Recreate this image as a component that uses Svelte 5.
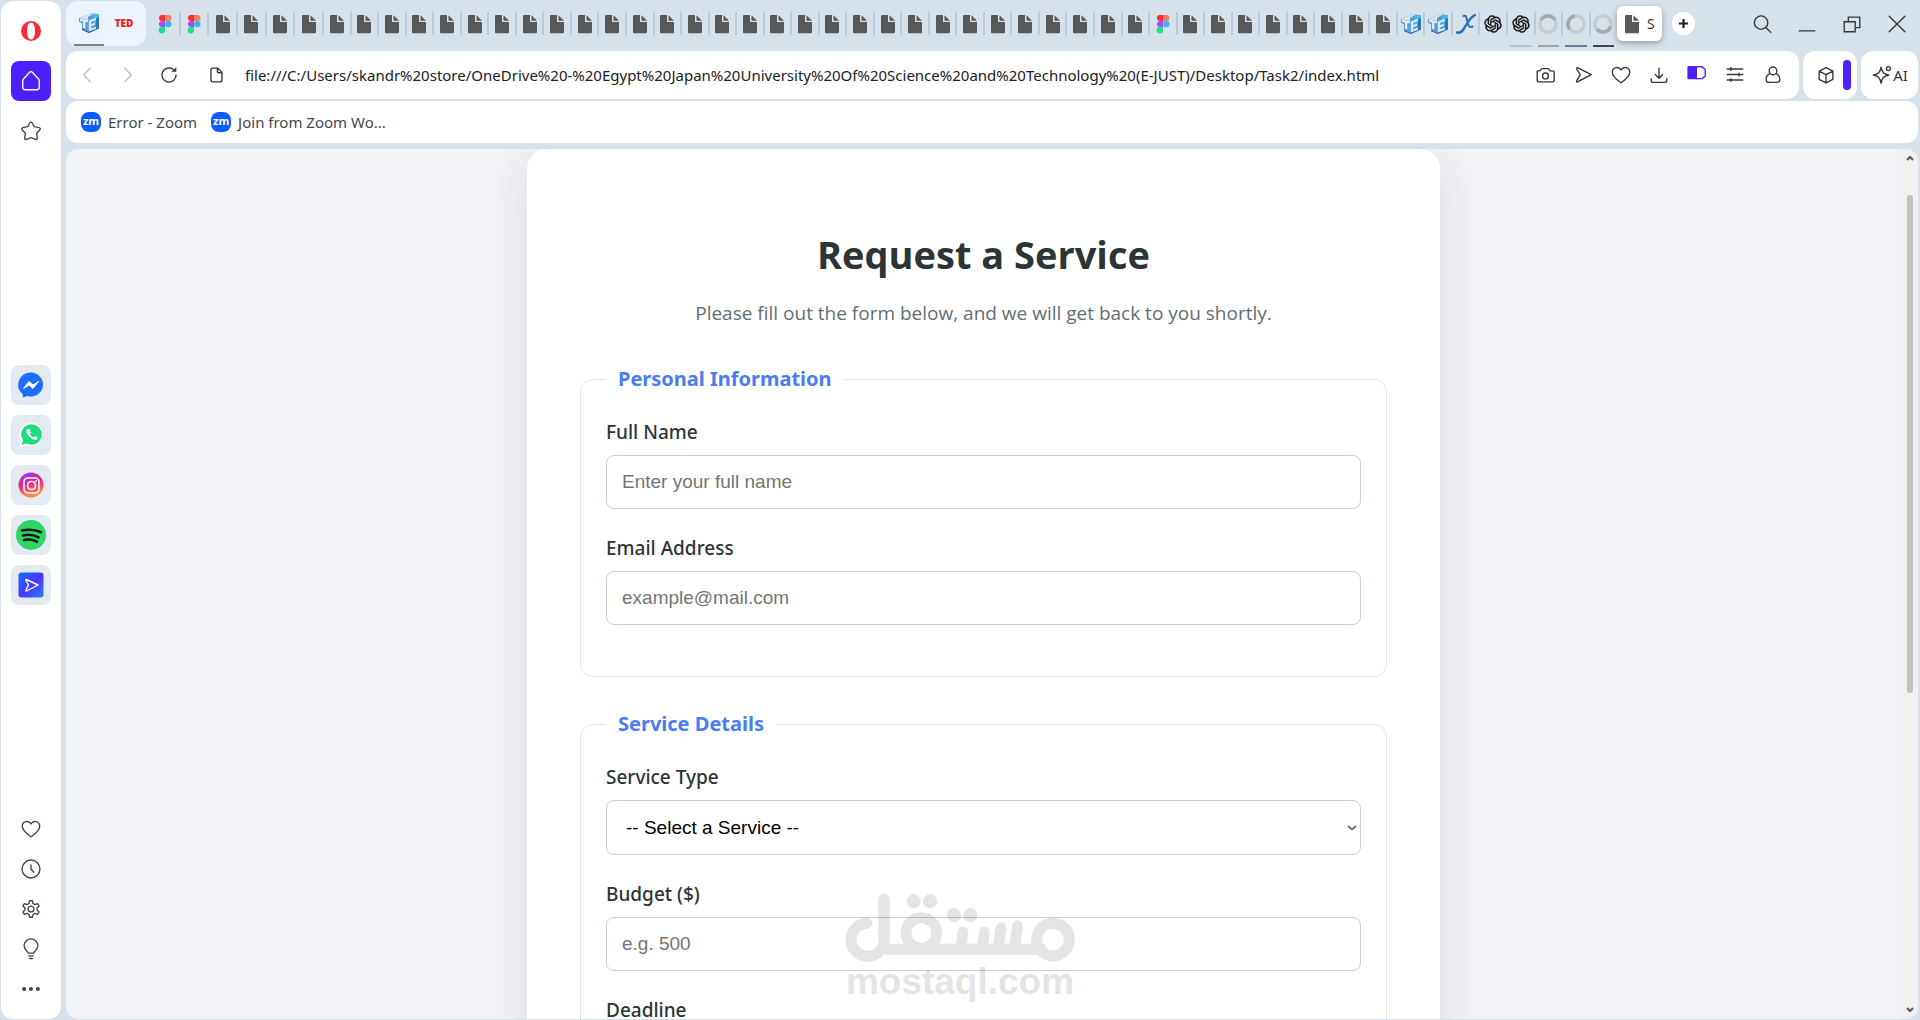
<script>
  const repeat = (kind, n) => Array.from({ length: n }, () => ({ kind }));
  const leading = [...repeat('figma', 2), ...repeat('doc', 4)];
  const trailing = [
    ...repeat('doc', 30),
    ...repeat('figma', 1),
    ...repeat('doc', 8),
    ...repeat('cube', 2),
    { kind: 'x' },
    { kind: 'gpt' },
    { kind: 'gpt', mark: 'pale' },
    { kind: 'spin', mark: 'grey' },
    { kind: 'spin', mark: 'blue', turn: 'left' },
    { kind: 'spin', mark: 'dark', turn: 'down' }
  ];
  const tools = ['camera', 'send', 'heart', 'download', 'battery', 'sliders', 'person'];
  const toolLabels = {
    camera: 'Snapshot', send: 'My Flow', heart: 'Add to bookmarks', download: 'Downloads',
    battery: 'Battery saver', sliders: 'Easy setup', person: 'Profile', bulb: 'Tips',
    clock: 'History', gear: 'Settings', more: 'More'
  };
  const apps = ['messenger', 'whatsapp', 'instagram', 'spotify', 'player'];
  const bottom = ['heart', 'clock', 'gear', 'bulb', 'more'];
  const bookmarks = ['Error - Zoom', 'Join from Zoom Wo...'];
</script>

{#snippet favicon(kind, turn)}
  {#if kind === 'figma'}
    <svg class="fav" viewBox="0 0 20 20">
      <path d="M10 1H7a3 3 0 0 0 0 6h3z" fill="#f92f33" /><path d="M10 1h3.500a3 3 0 0 1 0 6H10z" fill="#ff7f5c" />
      <path d="M10 7H7a3 3 0 0 0 0 6h3z" fill="#a050fb" /><circle cx="13.300" cy="10" r="3.200" fill="#42b4ec" />
      <path d="M10 13H7a3.200 3.200 0 1 0 3 3.200z" fill="#19e184" />
    </svg>
  {:else if kind === 'doc'}
    <svg class="fav" viewBox="0 0 20 20">
      <path d="M4.500 1H10v7h7v10a1.200 1.200 0 0 1-1.200 1.200H4.300A1.200 1.200 0 0 1 3 18V2.300A1.300 1.300 0 0 1 4.500 1z" fill="#58595b" /><path d="M11.500 1.200 17 6.700h-5.500z" fill="#58595b" />
    </svg>
  {:else if kind === 'cube'}
    <svg class="fav" viewBox="0 0 20 20">
      <path d="M0 5 13 0l7 1.500v14L10 20l-7-3V10L0 9z" fill="#5b9bd2" />
      <path d="M0 5 13 0l2 .5L9 4v3L1 5.500z" fill="#d5e4f0" />
      <path d="M14 1l6 .5v7l-6 1.500z" fill="#3cc0ee" />
      <path d="M1 5.800 9 7.200v2L6.300 8.900v6.600L4 14.700V8.500L1 8z" fill="#e3eef7" />
      <path d="M9.800 7.500 17 4.800v2.200l-4.800 1.800v2.200L16 9.700v2.100l-3.800 1.400v2.300L17 13.700v2.200L9.800 18.500z" fill="#d3e9f7" />
      <path d="M17 5l3-1v11.500L10 20v-1.500l7-2.600z" fill="#3474b8" /><path d="M3 16l7 3v1l-7-3z" fill="#2a62a6" />
    </svg>
  {:else if kind === 'x'}
    <svg class="fav" viewBox="0 0 20 20" fill="none" stroke="#2a71bb" stroke-linecap="round">
      <path d="M19 1C14 3 11 10 7 16c-2 3-4 3-6 2.500" stroke-width="2.400" /><path d="M7.500 2c3-1 3 2 4 6s2 6 5 4.500" stroke-width="2" />
    </svg>
  {:else if kind === 'gpt'}
    <svg class="fav" viewBox="-2 -2 28 28" fill="#0b0d0e" stroke="#0b0d0e" stroke-width=".5">
      <path d="M22.2819 9.8211a5.9847 5.9847 0 0 0-.5157-4.9108 6.0462 6.0462 0 0 0-6.5098-2.9A6.0651 6.0651 0 0 0 4.9807 4.1818a5.9847 5.9847 0 0 0-3.9977 2.9 6.0462 6.0462 0 0 0 .7427 7.0966 5.98 5.98 0 0 0 .511 4.9107 6.051 6.051 0 0 0 6.5146 2.9001A5.9847 5.9847 0 0 0 13.2599 24a6.0557 6.0557 0 0 0 5.7718-4.2058 5.9894 5.9894 0 0 0 3.9977-2.9001 6.0557 6.0557 0 0 0-.7475-7.0729zm-9.022 12.6081a4.4755 4.4755 0 0 1-2.8764-1.0408l.1419-.0804 4.7783-2.7582a.7948.7948 0 0 0 .3927-.6813v-6.7369l2.02 1.1686a.071.071 0 0 1 .038.052v5.5826a4.504 4.504 0 0 1-4.4945 4.4944zm-9.6607-4.1254a4.4708 4.4708 0 0 1-.5346-3.0137l.142.0852 4.783 2.7582a.7712.7712 0 0 0 .7806 0l5.8428-3.3685v2.3324a.0804.0804 0 0 1-.0332.0615L9.74 19.9502a4.4992 4.4992 0 0 1-6.1408-1.6464zM2.3408 7.8956a4.485 4.485 0 0 1 2.3655-1.9728V11.6a.7664.7664 0 0 0 .3879.6765l5.8144 3.3543-2.0201 1.1685a.0757.0757 0 0 1-.071 0l-4.8303-2.7865A4.504 4.504 0 0 1 2.3408 7.872zm16.5963 3.8558L13.1038 8.364 15.1192 7.2a.0757.0757 0 0 1 .071 0l4.8303 2.7913a4.4944 4.4944 0 0 1-.6765 8.1042v-5.6772a.79.79 0 0 0-.407-.667zm2.0107-3.0231l-.142-.0852-4.7735-2.7818a.7759.7759 0 0 0-.7854 0L9.409 9.2297V6.8974a.0662.0662 0 0 1 .0284-.0615l4.8303-2.7866a4.4992 4.4992 0 0 1 6.6802 4.66zM8.3065 12.863l-2.02-1.1638a.0804.0804 0 0 1-.038-.0567V6.0742a4.4992 4.4992 0 0 1 7.3757-3.4537l-.142.0805L8.704 5.459a.7948.7948 0 0 0-.3927.6813zm1.0976-2.3654l2.602-1.4998 2.6069 1.4998v2.9994l-2.5974 1.4997-2.6067-1.4997Z" />
    </svg>
  {:else}
    <svg class="fav {turn ?? ''}" viewBox="0 0 20 20" fill="none" stroke-width="3.600">
      <circle cx="10" cy="10" r="8.200" stroke="#c5ccd1" /><path d="M3 6A8.200 8.200 0 0 1 17 6" stroke="#a3abb0" />
    </svg>
  {/if}
{/snippet}

{#snippet glyph(name)}
  <svg class="glyph" viewBox="0 0 24 24" fill="none" stroke="currentColor" stroke-width="1.500" stroke-linejoin="round" stroke-linecap="round">
    {#if name === 'camera'}
      <path d="M3.500 7.500h3L8.500 5h7l2 2.500h3a1.500 1.500 0 0 1 1.500 1.500v8.500a2 2 0 0 1-2 2H5.500a2 2 0 0 1-2-2z" /><circle cx="12.500" cy="13" r="3.200" />
    {:else if name === 'send'}
      <path d="M6 4 21 11.500 6 19.500c-1.500.500-1-1-.500-2L9 11.500 5.500 6C5 4.500 5 4 6 4z" />
    {:else if name === 'heart'}
      <path d="M12 20.500C8.500 18 2.500 14 2.500 9c0-5.500 7-7 9.500-2.500 2.500-4.500 9.500-3 9.500 2.500 0 5-6 9-9.500 11.500z" />
    {:else if name === 'download'}
      <path d="M12 4.500v10.500M8 11.500l4 4 4-4M3.500 16v2a2 2 0 0 0 2 2h13a2 2 0 0 0 2-2v-2" />
    {:else if name === 'battery'}
      <path d="M11 3h6.500L21 6v7l-3.500 3H11z" stroke="#4d1fff" /><path d="M3 2.300h9v14.400H3A1.500 1.500 0 0 1 1.500 15V4A1.500 1.500 0 0 1 3 2.300z" fill="#4d1fff" stroke="none" />
    {:else if name === 'sliders'}
      <path d="M3.500 5.500h17M3.500 11.500h17M3.500 17.500h17M7.500 4v3M16.500 10v3M7.500 16v3" />
    {:else if name === 'person'}
      <circle cx="12" cy="7.500" r="4.200" /><path d="M8.500 10.500C5.500 12 4.500 14 4.500 16.500a3.500 3.500 0 0 0 3.500 3.500h8a3.500 3.500 0 0 0 3.500-3.500c0-2.500-1-4.500-4-6" />
    {:else if name === 'clock'}
      <circle cx="12" cy="12" r="9.800" /><path d="M12 7.500V12l3 3.500" />
    {:else if name === 'gear'}
      <circle cx="12" cy="12" r="3.200" />
      <path d="M10.500 3h3l.7 3 2 1.200 3-1 1.600 2.600-2.200 2.100v2.200l2.200 2.100-1.600 2.600-3-1-2 1.200-.7 3h-3l-.7-3-2-1.200-3 1-1.600-2.600 2.200-2.100v-2.200L3.200 8.800l1.600-2.600 3 1 2-1.200z" />
    {:else if name === 'bulb'}
      <path d="M9 16.500c0-2-4.500-3.500-4.500-8a7.500 7.500 0 0 1 15 0c0 4.500-4.500 6-4.500 8zM9.500 19.500h5M10.500 22.300h3" />
    {:else if name === 'more'}
      <g fill="currentColor" stroke="none"><circle cx="4.500" cy="12" r="2.200" /><circle cx="12" cy="12" r="2.200" /><circle cx="19.500" cy="12" r="2.200" /></g>
    {:else if name === 'home'}
      <path d="M3 11.500a3 3 0 0 1 1-2L10.500 2.500a2 2 0 0 1 3 0l6.500 7a3 3 0 0 1 1 2V19a2.500 2.500 0 0 1-2.500 2.500h-13A2.500 2.500 0 0 1 3 19z" />
    {:else if name === 'star'}
      <path d="M10.800 3c.6-1 1.800-1 2.400 0l2.300 4.300 5.300 1c1.300.300 1.700 1.500.9 2.300l-3.500 3.900.7 5.200c.1 1.300-.9 1.900-1.900 1.400L12 19.300l-5 1.800c-1 .500-2-.100-1.900-1.400l.7-5.200L2.300 10.600c-.8-.8-.4-2 .9-2.300l5.300-1z" />
    {:else if name === 'back'}
      <path d="M15.500 4.500 8.500 12l7 7.500" />
    {:else if name === 'forward'}
      <path d="M8.500 4.500l7 7.500-7 7.500" />
    {:else if name === 'reload'}
      <path d="M19.700 12A7.700 7.700 0 1 1 16.500 5.800" /><path d="M14.500 8.500h5.500V3.500z" fill="currentColor" stroke="none" />
    {:else if name === 'page'}
      <path d="M8.500 4.500h5.500l4.500 4.500v8.500a2 2 0 0 1-2 2h-8a2 2 0 0 1-2-2v-11a2 2 0 0 1 2-2zM13.500 4.500v3a2 2 0 0 0 2 2h3" />
    {:else if name === 'box'}
      <path d="M12 4l7.500 3.700v9L12 20.500l-7.500-3.800v-9zM4.500 7.700 12 11.500l7.500-3.800M12 11.500v9" />
    {:else if name === 'spark'}
      <path d="M11 3.500c1 6 3 7.500 8.500 8.500-5.500 1-7.500 3-8.500 9-1-6-3-8-8.500-9 5.500-1 7.500-2.500 8.500-8.500z" /><circle cx="19" cy="5" r="2.200" />
    {:else if name === 'search'}
      <circle cx="11" cy="10.500" r="7.300" /><path d="M16.500 16l5 5" />
    {:else if name === 'min'}
      <path d="M3.500 19.500h17" />
    {:else if name === 'restore'}
      <path d="M3.500 9.500h12v11h-12zM8 9.500v-5h12.500v11.500h-5" stroke-linejoin="miter" />
    {:else if name === 'close'}
      <path d="M3.500 3.500l17 17M20.500 3.500l-17 17" />
    {/if}
  </svg>
{/snippet}

{#snippet appIcon(name)}
  <svg class="app-icon" viewBox="0 0 30 30">
    {#if name === 'messenger'}
      <path d="M15 2.500a12.500 12 0 1 1-4 23.500L7 27.500 6.500 24A12.500 12.300 0 0 1 15 2.500z" fill="#1f6dff" />
      <path d="M7.500 18.500 13 11.500l4 3.500 5.500-3.500-5.500 7-4-3.500z" fill="#fff" stroke="#fff" stroke-linejoin="round" />
    {:else if name === 'whatsapp'}
      <path d="M15.500 2.500A12 12 0 1 1 10 25.500L3 27.500 5 21A12 12 0 0 1 15.500 2.500z" fill="#fff" /><circle cx="15.500" cy="14.500" r="10.300" fill="#19dd7e" /><path d="M5.500 25l2-6 4 4z" fill="#19dd7e" />
      <path d="M11.500 9c-2 1-1.500 3.500.5 6s5 5 7.500 4.800c1.500-.3 2.500-1.300 2-2.500L19 16l-1.500 1.500c-1.500-.5-3-2-3.500-3.500L15 12.500 13.500 9c-.5-.500-1.500-.500-2 0z" fill="#fff" />
    {:else if name === 'instagram'}
      <defs><linearGradient id="insta" x1="0" y1="0" x2=".3" y2="1"><stop offset="0" stop-color="#8a3dff" /><stop offset=".5" stop-color="#f01f8a" /><stop offset="1" stop-color="#ff8a3c" /></linearGradient></defs>
      <circle cx="15" cy="15" r="12.500" fill="url(#insta)" />
      <rect x="8" y="8" width="15" height="15" rx="4" fill="none" stroke="#fff" stroke-width="1.600" /><circle cx="15.500" cy="15.500" r="4" fill="none" stroke="#fff" stroke-width="1.600" /><circle cx="20" cy="11" r="1" fill="#fff" />
    {:else if name === 'spotify'}
      <circle cx="15" cy="15" r="15" fill="#2fd566" />
      <path d="M6 10.500c7-1.500 13-1 19 1.800M7 15.500c6-1.500 11-.500 15.500 1.800M8 20c5-1 9-.500 13 1.600" fill="none" stroke="#111a14" stroke-width="2.600" stroke-linecap="round" />
    {:else}
      <defs><linearGradient id="play" x1="0" y1="0" x2="1" y2="1"><stop offset="0" stop-color="#1273f5" /><stop offset=".5" stop-color="#4a35ff" /><stop offset="1" stop-color="#2f7df5" /></linearGradient></defs>
      <rect x="2.500" y="2.500" width="25" height="25" rx="3" fill="url(#play)" />
      <path d="M10.500 9.500 22 15l-11.500 6c-1 .300-.700-.700-.300-1.500l2.300-4.500-2.300-4c-.5-1-.5-1.500.3-1.500z" fill="none" stroke="#fff" stroke-width="1.400" stroke-linejoin="round" />
    {/if}
  </svg>
{/snippet}

<div class="browser">
  <nav class="sidebar" aria-label="Sidebar">
    <button class="side" aria-label="Opera menu">
      <svg class="opera" viewBox="0 0 20 20"><path fill-rule="evenodd" d="M10 0a10 10 0 1 1 0 20 10 10 0 0 1 0-20zm0 1.500C7.500 1.500 6 5 6 10s1.500 8.500 4 8.500 4-3.500 4-8.500-1.500-8.500-4-8.500z" fill="#fa2b37" /></svg>
    </button>
    <button class="side home" aria-label="Home">{@render glyph('home')}</button>
    <button class="side star" aria-label="Pinboards">{@render glyph('star')}</button>
    <div class="apps">
      {#each apps as a}<button class="side app" aria-label={a}>{@render appIcon(a)}</button>{/each}
    </div>
    <div class="bottom">
      {#each bottom as b}<button class="side small" aria-label={toolLabels[b]}>{@render glyph(b)}</button>{/each}
    </div>
  </nav>

  <div class="main">
    <header class="strip">
      <div class="pinned">
        <button class="pin current" aria-label="Pinned tab">{@render favicon('cube')}</button>
        <button class="pin ted">TED</button>
      </div>
      <div class="tabs leading">
        {#each leading as t}<button class="tab" aria-label="Tab">{@render favicon(t.kind)}</button>{/each}
      </div>
      <div class="tabs trailing">
        {#each trailing as t}<button class="tab {t.mark ?? ''}" class:marked={t.mark} aria-label="Tab">{@render favicon(t.kind, t.turn)}</button>{/each}
      </div>
      <button class="active">{@render favicon('doc')}<span>S</span></button>
      <button class="plus" aria-label="New tab"><svg viewBox="0 0 12 12"><path d="M6 1v10M1 6h10" stroke="#1c2328" stroke-width="2.400" /></svg></button>
      <div class="controls">
        {#each ['search', 'min', 'restore', 'close'] as c}<button aria-label={c}>{@render glyph(c)}</button>{/each}
      </div>
    </header>

    <div class="toolbar">
      <div class="address">
        <button class="nav off" aria-label="Back">{@render glyph('back')}</button>
        <button class="nav off" aria-label="Forward">{@render glyph('forward')}</button>
        <button class="nav" aria-label="Reload">{@render glyph('reload')}</button>
        <span class="page-icon">{@render glyph('page')}</span>
        <input class="url" aria-label="Address" value="file:///C:/Users/skandr%20store/OneDrive%20-%20Egypt%20Japan%20University%20Of%20Science%20and%20Technology%20(E-JUST)/Desktop/Task2/index.html" />
        <div class="tools">
          {#each tools as t}<button aria-label={toolLabels[t]}>{@render glyph(t)}</button>{/each}
        </div>
      </div>
      <div class="ext"><button aria-label="Extensions">{@render glyph('box')}</button><span class="bar"></span></div>
      <button class="ai">{@render glyph('spark')}AI</button>
    </div>

    <div class="bookmarks">
      {#each bookmarks as b}<a href="#top"><span class="zm">zm</span>{b}</a>{/each}
    </div>

    <div class="viewport">
      <main class="page">
        <form class="card">
          <h1>Request a Service</h1>
          <p>Please fill out the form below, and we will get back to you shortly.</p>
          <fieldset>
            <legend>Personal Information</legend>
            <div class="field"><label for="name">Full Name</label><input id="name" type="text" placeholder="Enter your full name" /></div>
            <div class="field"><label for="email">Email Address</label><input id="email" type="email" placeholder="example@mail.com" /></div>
          </fieldset>
          <fieldset>
            <legend>Service Details</legend>
            <div class="field">
              <label for="type">Service Type</label>
              <div class="select">
                <select id="type"><option>-- Select a Service --</option></select>
                <svg viewBox="0 0 10 6" aria-hidden="true"><path d="M1 1l4 3.500L9 1" /></svg>
              </div>
            </div>
            <div class="field"><label for="budget">Budget ($)</label><input id="budget" type="text" placeholder="e.g. 500" /></div>
            <div class="field"><label for="deadline">Deadline</label><input id="deadline" type="date" /></div>
          </fieldset>
        </form>
      </main>
      <div class="scroll" aria-hidden="true">
        <svg viewBox="0 0 8 6"><path d="M1 5l3-3 3 3" /></svg>
        <div class="track"><div class="thumb"></div></div>
        <svg viewBox="0 0 8 6"><path d="M1 1l3 3 3-3" /></svg>
      </div>
    </div>
  </div>

  <div class="watermark">
    <svg viewBox="75 102 690 203" fill="none" stroke="#000" stroke-width="33" stroke-linecap="round" role="img" aria-label="مستقل">
      <path d="M141 190A49.500 49.500 0 1 0 192 239V118" />
      <path d="M195 268H675" stroke-linecap="butt" />
      <circle cx="304" cy="219" r="46" stroke-width="32" /><circle cx="699" cy="239" r="49" />
      <path d="M429 216l-6 50M493 216l-6 50M543 204l-9 60M593 197l-9 66" stroke-width="32" />
      <g fill="#000" stroke="none"><circle cx="281" cy="124" r="21" /><circle cx="330" cy="124" r="21" /><circle cx="402" cy="165" r="21" /><circle cx="451" cy="165" r="21" /></g>
    </svg>
    <span>mostaql.com</span>
  </div>
</div>

<style>
  :global(body) { margin: 0; background: #d7e1e9; }
  * { box-sizing: border-box; }
  button { border: 0; padding: 0; background: none; font: inherit; color: inherit; display: flex; align-items: center; justify-content: center; flex: none; }
  svg { display: block; flex: none; }
  .browser { position: relative; display: flex; gap: 5px; height: 100vh; padding: 1px 0 1px 1px; overflow: hidden; font-family: "Noto Sans", "Open Sans", sans-serif; color: #32393e; }
  .glyph { width: 22px; height: 22px; }
  .fav { width: 20px; height: 20px; }
  .left { transform: rotate(-70deg); }
  .down { transform: rotate(170deg); }

  .sidebar { width: 60px; flex: none; background: #fff; border-radius: 12px; display: flex; flex-direction: column; align-items: center; padding: 10px 0; color: #3d474d; }
  .side { width: 40px; height: 40px; border-radius: 8px; }
  .opera { width: 20px; height: 20px; }
  .home { margin-top: 10px; background: #4d1fff; color: #fff; }
  .star { margin-top: 10px; }
  .apps { display: flex; flex-direction: column; gap: 10px; margin-top: 214px; }
  .app { background: #e4eaf2; }
  .app-icon { width: 30px; height: 30px; }
  .bottom { margin-top: auto; }

  .main { flex: 1; min-width: 0; display: flex; flex-direction: column; }
  .strip { display: flex; height: 50px; flex: none; }
  .pinned { display: flex; width: 80px; height: 45px; background: #ebf4fe; border-radius: 12px; margin-right: 5px; padding: 0 8px; flex: none; }
  .pin { width: 30px; height: 45px; border-bottom: 2px solid transparent; }
  .pin.current { border-color: #7b8188; }
  .ted { width: 34px; margin-left: 3px; color: #f0201f; font-weight: 900; font-size: 10px; }
  .tabs { display: flex; min-width: 0; }
  .leading { flex: 172 1 0; }
  .trailing { flex: 1293 1 0; }
  .tab { position: relative; flex: 1 1 0; min-width: 0; height: 46px; }
  .tab::after { content: ""; position: absolute; right: -1px; top: 11px; width: 2px; height: 23px; background: #b8cbdd; }
  .tab:last-child::after { width: 0; }
  .leading .tab:last-child::after { width: 2px; }
  .marked::before { content: ""; position: absolute; bottom: 0; left: 3px; right: 3px; height: 2px; background: #b4c3cb; }
  .grey::before { background: #9ea5aa; }
  .blue::before { background: #6d7ba5; }
  .dark::before { background: #3f464f; }
  .active { width: 45px; height: 35px; margin-top: 5px; background: #fff; border-radius: 6px; box-shadow: 0 2px 6px #8d9ba8; justify-content: flex-start; padding-left: 5px; gap: 5px; font-size: 14px; }
  .plus { width: 23px; height: 23px; margin: 11px 44px 0 10px; border-radius: 50%; background: #fff; }
  .plus svg { width: 11px; height: 11px; }
  .controls { display: flex; height: 46px; margin-right: 1px; }
  .controls button { width: 45px; }

  .toolbar { display: flex; gap: 4px; height: 48px; flex: none; margin-right: 2px; }
  .address, .ext, .ai, .bookmarks { background: #fff; border-radius: 12px; }
  .address { flex: 1; min-width: 0; display: flex; align-items: center; padding-right: 7px; }
  .nav { width: 41px; height: 40px; }
  .off { color: #b9bec1; }
  .page-icon { width: 24px; margin: 0 16px; }
  .url { flex: 1; min-width: 0; border: 0; padding: 0; background: none; outline: 0; font: 15px "Noto Sans", sans-serif; color: #1c2125; }
  .tools { display: flex; }
  .tools button { width: 38px; height: 40px; }
  .ext { width: 54px; display: flex; align-items: center; padding-left: 12px; gap: 6px; }
  .bar { width: 8px; height: 30px; border-radius: 4px; background: #4d1fff; }
  .ai { width: 57px; font-size: 15px; }
  .bookmarks { display: flex; align-items: center; gap: 14px; height: 42px; flex: none; margin: 2px 2px 6px 0; padding: 0 15px; font-size: 15px; line-height: 20px; }
  .bookmarks a { display: flex; align-items: center; gap: 7px; color: #42494e; text-decoration: none; }
  .zm { width: 20px; height: 20px; border-radius: 8px; background: #0b5cff; color: #fff; font-size: 11px; font-weight: 700; line-height: 17px; text-align: center; }

  .viewport { flex: 1; min-height: 0; display: flex; margin-right: 2px; border-radius: 12px; background: #f0f2f5; overflow: hidden; }
  .page { flex: 1; min-width: 0; overflow: hidden; display: flex; justify-content: center; align-items: flex-start; }
  .card { width: 100%; max-width: 913px; background: #fff; border-radius: 20px; padding: 77px 53px 53px; box-shadow: 0 13px 40px rgba(0, 0, 0, .1); }
  h1 { margin: 0; font: 700 38px/56px "Open Sans", sans-serif; text-align: center; color: #2d3436; }
  p { margin: 15px 0 35px; font: 19px/32px "Open Sans", sans-serif; text-align: center; color: #636e72; }
  fieldset { margin: 0 0 32px; border: 1px solid #dfe6e9; border-radius: 13px; padding: 25px 25px 25px; min-width: 0; }
  legend { padding: 0 12px; font-size: 20px; line-height: 30px; font-weight: 700; color: #4a7cf3; }
  .field { margin-bottom: 26px; }
  label { display: block; font-size: 19px; line-height: 26px; margin-bottom: 10px; font-weight: 500; color: #2d3436; }
  .field input, select { display: block; width: 100%; height: 54px; border: 1px solid #c8d0d3; border-radius: 8px; padding: 0 15px; font: 19px "Liberation Sans", sans-serif; background: #fff; color: #000; }
  .field input::placeholder { color: #757575; }
  .select { display: grid; align-items: center; }
  .select > * { grid-area: 1 / 1; }
  select { appearance: none; height: 55px; padding: 0 19px; }
  .select svg { width: 10px; height: 6px; justify-self: end; margin-right: 4px; fill: none; stroke: #6b7175; stroke-width: 2; pointer-events: none; }

  .scroll { width: 17px; flex: none; background: #f0f0f0; display: flex; flex-direction: column; align-items: center; padding: 6px 0; }
  .scroll svg { width: 8px; height: 6px; fill: none; stroke: #55595c; stroke-width: 2; }
  .track { flex: 1; width: 6px; padding: 34px 0; }
  .thumb { height: 64%; border-radius: 3px; background: #c1c1c1; }

  .watermark { position: absolute; left: 50%; bottom: 18px; width: 230px; margin-left: -115px; opacity: .1; color: #000; pointer-events: none; }
  .watermark span { display: block; font: 700 37px/40px "Liberation Sans", sans-serif; text-align: center; }
</style>
